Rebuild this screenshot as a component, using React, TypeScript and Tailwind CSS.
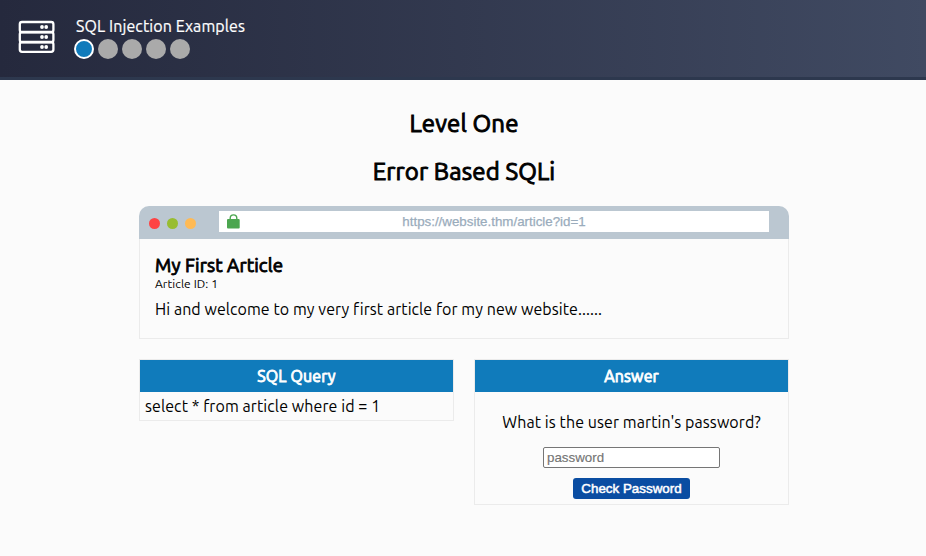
const fauxBold = "font-normal tracking-[0.15px] [-webkit-text-stroke:0.95px_currentColor]";

function ServerIcon() {
  return (
    <svg className="mt-1 h-[34px] w-[37px]" viewBox="0 0 37 34" fill="none" stroke="white" strokeWidth="2.3">
      <rect x="1.8" y="2" width="33.6" height="10.3" rx="2.2" />
      <rect x="1.8" y="12" width="33.6" height="10.3" rx="2.2" />
      <rect x="1.8" y="22" width="33.6" height="9.8" rx="2.2" />
      {[7, 17, 27].map((y) => (
        <g key={y} fill="white" stroke="none">
          <circle cx="24" cy={y} r="1.9" />
          <circle cx="28.2" cy={y} r="1.9" />
        </g>
      ))}
    </svg>
  );
}

function Panel({ title, children }: { title: string; children: React.ReactNode }) {
  return (
    <section className="w-[315px] border border-[#ebebeb]">
      <h2 className="h-8 bg-[#107bbb] text-center text-[16px] leading-[33px] tracking-[0.15px] text-white [-webkit-text-stroke:0.85px_currentColor]">{title}</h2>
      {children}
    </section>
  );
}

export default function App() {
  return (
    <div className="h-[556px] w-[926px] overflow-hidden bg-[#fbfbfb] font-['Ubuntu','Noto_Sans',sans-serif] text-black">
      <header className="flex h-20 border-b-[3px] border-[#2d384e] bg-linear-to-r from-[#25293d] to-[#404a62] pl-[18px] pt-4 text-white">
        <ServerIcon />
        <div className="ml-[19px]">
          <div className="ml-0.5 h-[23px] text-[16px] leading-[20px] tracking-[0.1px] [-webkit-text-stroke:0.2px_currentColor]">SQL Injection Examples</div>
          <div className="flex gap-1">
            <span className="size-5 rounded-full border-2 border-white bg-[#107bbb]" />
            {[2, 3, 4, 5].map((n) => (
              <span key={n} className="size-5 rounded-full bg-[#aaa]" />
            ))}
          </div>
        </div>
      </header>
      <main className="ml-[139px] w-[650px] pt-[28px]">
        <h1 className={`h-12 text-center text-[24px] leading-8 ${fauxBold}`}>Level One</h1>
        <h1 className={`h-[50px] text-center text-[24px] leading-8 ${fauxBold}`}>Error Based SQLi</h1>
        <div className="flex h-[33px] rounded-t-[10px] bg-[#bbc7d1] pl-[10px] pt-[5px]">
          <div className="mt-[7px] flex w-[70px] gap-[7px]">
            <i className="size-[11px] rounded-full bg-[#fe4344]" />
            <i className="size-[11px] rounded-full bg-[#98bd31]" />
            <i className="size-[11px] rounded-full bg-[#ffba55]" />
          </div>
          <div className="flex h-[21px] w-[550px] bg-white pl-2">
            <svg className="mt-[3px] h-[15px] w-[13px]" viewBox="0 0 13 15">
              <path d="M3.2 6V4.2a3.3 3.3 0 0 1 6.6 0V6" fill="none" stroke="#4ba64f" strokeWidth="1.4" />
              <rect y="5" width="12.7" height="9.5" rx="1" fill="#4ba64f" />
            </svg>
            <div className="flex-1 pr-[21px] text-center font-['Liberation_Sans',sans-serif] text-[13.33px] leading-[21px] text-[#9aacbc] [-webkit-text-stroke:0.25px_currentColor]">https://website.thm/article?id=1</div>
          </div>
        </div>
        <article className="h-[100px] border border-t-0 border-[#ebebeb] pl-[15px] pt-4">
          <h2 className="text-[18.72px] leading-[22px] tracking-[0.15px] [-webkit-text-stroke:0.9px_currentColor]">My First Article</h2>
          <div className="text-[12px] leading-[14px] tracking-[0.07px]">Article ID: 1</div>
          <p className="mt-2 text-[16px] leading-[20px] tracking-[0.06px]">Hi and welcome to my very first article for my new website......</p>
        </article>
        <div className="mt-5 flex items-start justify-between">
          <Panel title="SQL Query">
            <div className="h-7 px-[5px] pt-1 text-[16px] leading-[20px] tracking-[0.08px]">select * from article where id = 1</div>
          </Panel>
          <Panel title="Answer">
            <div className="flex h-[112px] flex-col items-center pt-5">
              <p className="text-[16px] leading-[20px] tracking-[0.08px]">What is the user martin's password?</p>
              <input
                className="mt-[15px] h-[21px] w-[177px] rounded-[2px] border border-[#767676] bg-white px-[3px] font-['Liberation_Sans',sans-serif] text-[13.33px] [-webkit-text-stroke:0.15px_#757575] placeholder:text-[#757575]"
                placeholder="password"
              />
              <button className="mt-[10px] h-[21px] w-[117px] rounded-[3px] bg-[#0a4da2] font-['Liberation_Sans',sans-serif] text-[13.33px] leading-[21px] tracking-[0.02px] whitespace-nowrap text-white [-webkit-text-stroke:0.5px_currentColor]">Check Password</button>
            </div>
          </Panel>
        </div>
      </main>
    </div>
  );
}
